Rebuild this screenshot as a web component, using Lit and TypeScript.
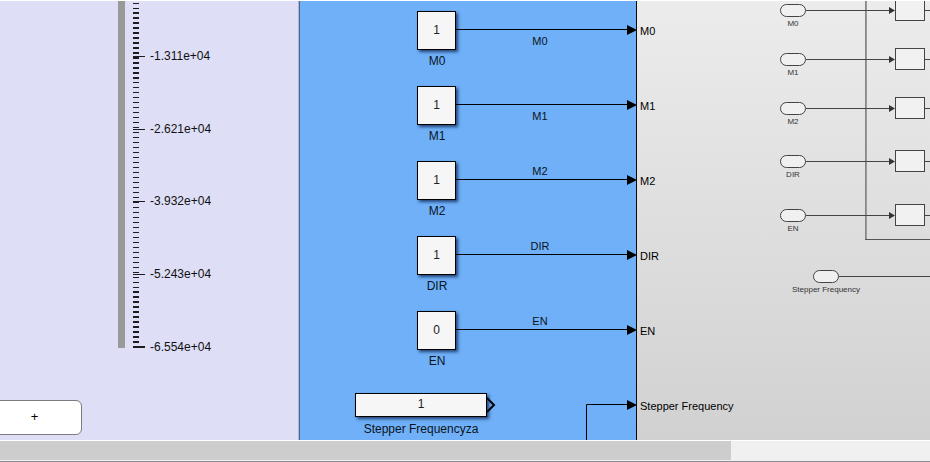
import { LitElement, html, svg, css } from "lit";
import { customElement } from "lit/decorators.js";

/** Minor ticks every 5px; the two dense bands are drawn heavier. */
const minorTicks = Array.from({ length: 69 }, (_, i) => {
  const y = 2 + i * 5;
  if (y < 12) return { y, h: 1 };
  if (y <= 77) return { y: y - 1, h: 2 };
  if (y < 290) return { y: y - 1, h: 1 };
  return { y: y - 2, h: 2 };
});

const majorTicks = [
  { y: 55, text: "-1.311e+04" },
  { y: 128, text: "-2.621e+04" },
  { y: 200, text: "-3.932e+04" },
  { y: 273, text: "-5.243e+04" },
  { y: 346, text: "-6.554e+04" },
];

@customElement("gauge-panel")
class GaugePanel extends LitElement {
  static styles = css`
    :host {
      display: block;
      position: relative;
      overflow: hidden;
      background: #dedef6;
      border-right: 1px solid #4a6590;
      box-shadow: inset -1px 0 #b4b6cc;
    }
    .scale {
      display: block;
      width: 100%;
      height: 100%;
    }
    .tick-label {
      position: absolute;
      left: 150px;
      font-size: 12px;
      line-height: 16px;
      color: #111;
    }
    .step {
      position: absolute;
      left: -13px;
      top: 399px;
      width: 95px;
      height: 35px;
      padding: 0 0 2px;
      border: 1px solid #7c7c80;
      border-radius: 6px;
      background: #fff;
      font: 13px/16px "Liberation Sans", Arial, sans-serif;
      color: #000;
    }
  `;

  render() {
    return html`
      <svg class="scale" shape-rendering="crispEdges" aria-hidden="true">
        <rect x="118" y="0" width="7" height="347" fill="#999" />
        ${minorTicks.map(
          (t) => svg`<rect x="133" y=${t.y} width="6" height=${t.h} fill="#1c1c20" />`
        )}
        ${majorTicks.map(
          (t) => svg`<rect x="133" y=${t.y} width="12" height="1" fill="#1c1c20" />`
        )}
        <rect x="133" y="345" width="12" height="1" fill="#1c1c20" />
      </svg>
      ${majorTicks.map(
        (t) => html`<span class="tick-label" style="top:${t.y - 8}px">${t.text}</span>`
      )}
      <button class="step" aria-label="Increase">+</button>
    `;
  }
}

const constants = [
  { name: "M0", value: "1", y: 29, labelY: 40 },
  { name: "M1", value: "1", y: 104, labelY: 115 },
  { name: "M2", value: "1", y: 179, labelY: 170 },
  { name: "DIR", value: "1", y: 254, labelY: 245 },
  { name: "EN", value: "0", y: 329, labelY: 320 },
];

@customElement("signal-panel")
class SignalPanel extends LitElement {
  static styles = css`
    :host {
      display: block;
      position: relative;
      overflow: hidden;
      background: #6fb0f8;
      border-right: 1px solid #0a0a0a;
    }
    .wires {
      display: block;
      width: 100%;
      height: 100%;
    }
    .block {
      position: absolute;
      box-sizing: border-box;
      display: flex;
      align-items: center;
      justify-content: center;
      padding-bottom: 2px;
      border: 1px solid #000;
      background: #f6f6f6;
      box-shadow: 2px 2px 3px rgba(0, 20, 60, 0.7);
      font-size: 12px;
      line-height: 16px;
      color: #222;
    }
    .square {
      left: 117px;
      width: 39px;
      height: 39px;
    }
    .wide {
      left: 55px;
      top: 392px;
      width: 132px;
      height: 24px;
    }
    .name,
    .signal {
      position: absolute;
      transform: translateX(-50%);
      line-height: 16px;
      white-space: nowrap;
      color: #0a1420;
    }
    .name {
      left: 137px;
      font-size: 12px;
    }
    .wide-name {
      left: 121px;
      top: 420px;
    }
    .signal {
      left: 240px;
      font-size: 11px;
    }
  `;

  render() {
    return html`
      <svg class="wires" aria-hidden="true">
        ${constants.map(
          (c) => svg`
            <path d="M156 ${c.y - 0.5}H330" stroke="#000" fill="none" />
            <path d="M327 ${c.y - 5}L337 ${c.y}L327 ${c.y + 5}Z" />`
        )}
        <path d="M286.5 440V403.5H330" stroke="#000" fill="none" />
        <path d="M327 399L337 404L327 409Z" />
        <path d="M187 397L194 404L187 411" stroke="#000" stroke-width="2" fill="none" />
      </svg>
      ${constants.map(
        (c) => html`
          <div class="block square" style="top:${c.y - 19}px">${c.value}</div>
          <span class="name" style="top:${c.y + 23}px">${c.name}</span>
          <span class="signal" style="top:${c.labelY - 8}px">${c.name}</span>
        `
      )}
      <div class="block wide">1</div>
      <span class="name wide-name">Stepper Frequencyza</span>
    `;
  }
}

const ports = [
  { name: "M0", y: 30 },
  { name: "M1", y: 105 },
  { name: "M2", y: 180 },
  { name: "DIR", y: 255 },
  { name: "EN", y: 330 },
  { name: "Stepper Frequency", y: 405 },
];

const inports = [
  { name: "M0", y: 9 },
  { name: "M1", y: 58 },
  { name: "M2", y: 107 },
  { name: "DIR", y: 160 },
  { name: "EN", y: 214 },
];

@customElement("subsystem-panel")
class SubsystemPanel extends LitElement {
  static styles = css`
    :host {
      display: block;
      position: relative;
      overflow: hidden;
      background: linear-gradient(#ececec, #d1d1d1);
    }
    .wires {
      display: block;
      width: 100%;
      height: 100%;
    }
    .port {
      position: absolute;
      left: 3px;
      font-size: 11px;
      line-height: 16px;
      white-space: nowrap;
      color: #000;
    }
    .inport {
      position: absolute;
      left: 156px;
      transform: translateX(-50%);
      font-size: 8px;
      line-height: 12px;
      white-space: nowrap;
      color: #333;
    }
    .frequency {
      left: 189px;
      top: 283px;
    }
  `;

  render() {
    return html`
      <svg class="wires" stroke="#444" fill="none" aria-hidden="true">
        <path d="M228.5 0V238.5" stroke="#888" />
        <path d="M229.5 0V238" stroke="#999" />
        <line x1="228" y1="238.5" x2="100%" y2="238.5" stroke="#555" />
        ${inports.map(
          (p) => svg`
            <rect x="143.5" y=${p.y - 5.5} width="25" height="12" rx="6" fill="#f0f0f0" />
            <path d="M169 ${p.y + 0.5}H254" />
            <path d="M252 ${p.y - 3}L258 ${p.y + 0.5}L252 ${p.y + 4}Z" fill="#333" stroke="none" />
            <rect x="258.5" y=${p.y - 10.5} width="29" height="21" fill="#f1f1f1" />
            <line x1="288" y1=${p.y + 0.5} x2="100%" y2=${p.y + 0.5} />`
        )}
        <rect x="176.5" y="269.5" width="25" height="12" rx="6" fill="#f0f0f0" />
        <line x1="202" y1="275.5" x2="100%" y2="275.5" />
      </svg>
      ${ports.map((p) => html`<span class="port" style="top:${p.y - 8}px">${p.name}</span>`)}
      ${inports.map(
        (p) => html`<span class="inport" style="top:${p.y + 8}px">${p.name}</span>`
      )}
      <span class="inport frequency">Stepper Frequency</span>
    `;
  }
}

@customElement("app-root")
class AppRoot extends LitElement {
  static styles = css`
    :host {
      display: flex;
      flex-direction: column;
      box-sizing: border-box;
      min-height: 100vh;
      padding-top: 1px;
      background: #fff;
      font-family: "Liberation Sans", Arial, sans-serif;
    }
    .canvas {
      flex: 1;
      display: grid;
      grid-template-columns: 300px 337px minmax(0, 1fr);
      min-height: 439px;
    }
    .scrollbar {
      height: 19px;
      margin-top: 1px;
      background: #f0f0f0;
      border-bottom: 1px solid #8a8a94;
      padding-bottom: 1px;
    }
    .thumb {
      height: 100%;
      width: 78.6%;
      background: #cdcdcd;
    }
  `;

  render() {
    return html`
      <main class="canvas">
        <gauge-panel></gauge-panel>
        <signal-panel></signal-panel>
        <subsystem-panel></subsystem-panel>
      </main>
      <div
        class="scrollbar"
        role="scrollbar"
        aria-orientation="horizontal"
        aria-label="Canvas"
        aria-valuenow="0"
      >
        <div class="thumb"></div>
      </div>
    `;
  }
}
